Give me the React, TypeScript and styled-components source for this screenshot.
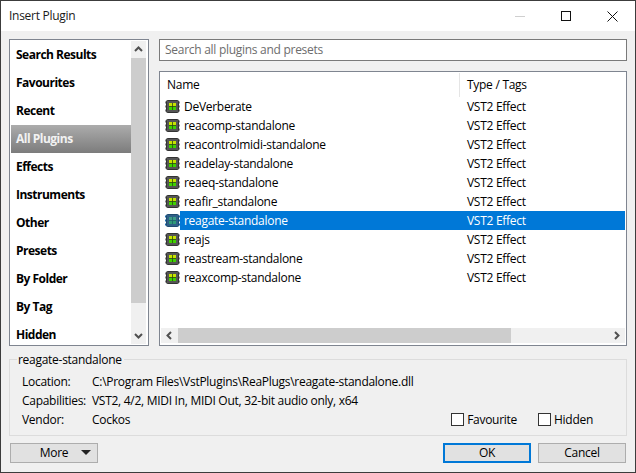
import React from "react";
import styled, { createGlobalStyle } from "styled-components";

const GlobalStyle = createGlobalStyle`
  html, body {
    margin: 0;
    padding: 0;
    background: #f0f0f0;
  }
  * {
    box-sizing: border-box;
  }
`;

const Window = styled.div`
  width: 636px;
  height: 473px;
  display: flex;
  flex-direction: column;
  overflow: hidden;
  background: #f0f0f0;
  border: 1px solid #3c3c3c;
  color: #000;
  font-family: "Open Sans", "Noto Sans", sans-serif;
  font-size: 12px;
  letter-spacing: -0.28px;
`;

const TitleBar = styled.div`
  height: 30px;
  flex: none;
  display: flex;
  align-items: center;
  background: #fff;
  padding-left: 8px;
  color: #1a1a1a;
`;

const Title = styled.span`
  flex: 1;
  padding-bottom: 2px;
`;

const WindowButton = styled.span`
  width: 46px;
  height: 30px;
  display: flex;
  align-items: center;
  justify-content: center;
`;

const Content = styled.div`
  flex: 1;
  min-height: 0;
  display: flex;
  flex-direction: column;
  padding: 8px 8px 0;
`;

const Top = styled.div`
  height: 307px;
  flex: none;
  display: flex;
  gap: 10px;
`;

const Sidebar = styled.div`
  width: 140px;
  flex: none;
  display: flex;
  padding: 1px 2px 1px 1px;
  background: #fff;
  border: 1px solid #7f8590;
  overflow: hidden;
`;

const Categories = styled.div`
  flex: 1;
  min-width: 0;
  height: 100%;
  overflow: hidden;
`;

const Category = styled.div<{ $active?: boolean }>`
  height: 28px;
  display: flex;
  align-items: center;
  padding: 0 0 2px 5px;
  font-weight: 700;
  letter-spacing: -0.5px;
  color: ${(p) => (p.$active ? "#f2f2f2" : "#000")};
  background: ${(p) => (p.$active ? "linear-gradient(#acacac, #7c7c7c)" : "transparent")};
`;

const VScroll = styled.div`
  width: 15px;
  flex: none;
  display: flex;
  flex-direction: column;
  background: #f0f0f0;
`;

const ScrollEnd = styled.div`
  flex: none;
  width: 15px;
  height: 17px;
  display: flex;
  align-items: center;
  justify-content: center;
`;

const VThumb = styled.div`
  height: 245px;
  flex: none;
  background: #cdcdcd;
`;

const Spacer = styled.div`
  flex: 1;
`;

const RightColumn = styled.div`
  flex: 1;
  min-width: 0;
  display: flex;
  flex-direction: column;
  gap: 10px;
`;

const Search = styled.div`
  height: 22px;
  flex: none;
  display: flex;
  align-items: center;
  padding: 0 0 2px 5px;
  background: #fff;
  border: 1px solid #7a7a7a;
  color: #6d6d6d;
`;

const Table = styled.div`
  flex: 1;
  min-height: 0;
  display: flex;
  flex-direction: column;
  padding: 1px 1px 2px;
  background: #fff;
  border: 1px solid #7f8590;
`;

const Header = styled.div`
  height: 24px;
  flex: none;
  display: flex;
  align-items: center;
`;

const HeaderName = styled.div`
  width: 299px;
  padding: 0 0 2px 6px;
  flex: none;
  height: 100%;
  display: flex;
  align-items: center;
  border-right: 1px solid #e5e5e5;
`;

const HeaderType = styled.div`
  padding: 0 0 2px 7px;
`;

const Rows = styled.div`
  flex: 1;
  min-height: 0;
`;

const Row = styled.div`
  height: 19px;
  display: flex;
  align-items: center;
  padding-left: 4px;
`;

const RowBody = styled.div<{ $selected?: boolean }>`
  flex: 1;
  height: 100%;
  display: flex;
  align-items: center;
  padding-left: 4px;
  color: ${(p) => (p.$selected ? "#fff" : "#000")};
  background: ${(p) => (p.$selected ? "#0078d7" : "transparent")};
`;

const RowName = styled.span`
  width: 283px;
  flex: none;
`;

const HScroll = styled.div`
  height: 15px;
  flex: none;
  display: flex;
  background: #f0f0f0;
`;

const HEnd = styled.div`
  width: 17px;
  flex: none;
  display: flex;
  align-items: center;
  justify-content: center;
`;

const HThumb = styled.div`
  width: 333px;
  flex: none;
  background: #cdcdcd;
`;

const Group = styled.fieldset`
  height: 85px;
  flex: none;
  margin: 5px 0 0;
  padding: 5px 33px 0 12px;
  min-width: 0;
  border: 1px solid #dcdcdc;
`;

const GroupTitle = styled.legend`
  margin-left: -5px;
  padding: 0 2px 0 1px;
  height: 16px;
  line-height: 18px;
`;

const DetailRow = styled.div`
  height: 19px;
  display: flex;
  align-items: center;
`;

const DetailLabel = styled.span`
  width: 70px;
  flex: none;
`;

const Checks = styled.div`
  margin-left: auto;
  display: flex;
  align-items: center;
  gap: 21px;
`;

const CheckLabel = styled.label`
  display: flex;
  align-items: center;
  gap: 3px;
`;

const CheckBox = styled.span`
  width: 13px;
  height: 13px;
  flex: none;
  background: #fff;
  border: 1px solid #333;
`;

const Footer = styled.div`
  display: flex;
  gap: 7px;
  margin-top: 7px;
  padding: 0 1px;
`;

const Button = styled.div<{ $primary?: boolean }>`
  width: 88px;
  height: 20px;
  display: flex;
  align-items: center;
  justify-content: center;
  padding-bottom: 1px;
  background: #e1e1e1;
  border: ${(p) => (p.$primary ? "2px solid #0078d7" : "1px solid #adadad")};
`;

const MoreButton = styled(Button)`
  gap: 13px;
  padding-left: 23px;
  margin-right: auto;
`;

const Chevron = ({ d }: { d: string }) => (
  <svg width="9" height="9" viewBox="0 0 9 9" fill="none">
    <path d={d} stroke="#505050" strokeWidth="2" />
  </svg>
);

const PluginIcon = ({ selected }: { selected?: boolean }) => {
  const body = selected ? "#2f5f86" : "#555";
  const edge = selected ? "#1f4a70" : "#333";
  const pin = selected ? "#1c6fb0" : "#8a8a8a";
  const top = selected ? "#3d9c86" : "#c8e400";
  const bottom = selected ? "#2f9a78" : "#3ed200";
  const line = selected ? "#1f5f6a" : "#2c4a10";
  return (
    <svg width="15" height="13" viewBox="0 0 15 13" style={{ flex: "none", marginBottom: 1 }}>
      <path d="M0 2.5h2M0 6.5h2M0 10.5h2M13 2.5h2M13 6.5h2M13 10.5h2" stroke={pin} strokeWidth="2" />
      <rect x="1.5" y="0.5" width="12" height="12" rx="1" fill={body} stroke={edge} />
      <rect x="4" y="3" width="7" height="3.5" fill={top} />
      <rect x="4" y="6.5" width="7" height="3.5" fill={bottom} />
      <path d="M7.5 3v7M4 6.5h7" stroke={line} strokeWidth="0.8" />
    </svg>
  );
};

const categories = [
  "Search Results",
  "Favourites",
  "Recent",
  "All Plugins",
  "Effects",
  "Instruments",
  "Other",
  "Presets",
  "By Folder",
  "By Tag",
  "Hidden",
];

const plugins = [
  "DeVerberate",
  "reacomp-standalone",
  "reacontrolmidi-standalone",
  "readelay-standalone",
  "reaeq-standalone",
  "reafir_standalone",
  "reagate-standalone",
  "reajs",
  "reastream-standalone",
  "reaxcomp-standalone",
];

export default function App() {
  return (
    <>
      <GlobalStyle />
      <Window>
        <TitleBar>
          <Title>Insert Plugin</Title>
          <WindowButton>
            <svg width="10" height="10" viewBox="0 0 10 10">
              <path d="M0 5.5h10" stroke="#cfcfcf" />
            </svg>
          </WindowButton>
          <WindowButton>
            <svg width="10" height="10" viewBox="0 0 10 10">
              <rect x="0.5" y="0.5" width="9" height="9" fill="none" stroke="#111" />
            </svg>
          </WindowButton>
          <WindowButton>
            <svg width="11" height="11" viewBox="0 0 11 11">
              <path d="M0.5 0.5l10 10M10.5 0.5l-10 10" stroke="#111" />
            </svg>
          </WindowButton>
        </TitleBar>
        <Content>
          <Top>
            <Sidebar>
              <Categories>
                {categories.map((c) => (
                  <Category key={c} $active={c === "All Plugins"}>
                    {c}
                  </Category>
                ))}
              </Categories>
              <VScroll>
                <ScrollEnd>
                  <Chevron d="M1 6l3.5-3.5L8 6" />
                </ScrollEnd>
                <VThumb />
                <Spacer />
                <ScrollEnd>
                  <Chevron d="M1 3l3.5 3.5L8 3" />
                </ScrollEnd>
              </VScroll>
            </Sidebar>
            <RightColumn>
              <Search>Search all plugins and presets</Search>
              <Table>
                <Header>
                  <HeaderName>Name</HeaderName>
                  <HeaderType>Type / Tags</HeaderType>
                </Header>
                <Rows>
                  {plugins.map((p) => {
                    const selected = p === "reagate-standalone";
                    return (
                      <Row key={p}>
                        <PluginIcon selected={selected} />
                        <RowBody $selected={selected}>
                          <RowName>{p}</RowName>
                          <span>VST2 Effect</span>
                        </RowBody>
                      </Row>
                    );
                  })}
                </Rows>
                <HScroll>
                  <HEnd>
                    <Chevron d="M6 1L2.5 4.5 6 8" />
                  </HEnd>
                  <HThumb />
                  <Spacer />
                  <HEnd>
                    <Chevron d="M3 1l3.5 3.5L3 8" />
                  </HEnd>
                </HScroll>
              </Table>
            </RightColumn>
          </Top>
          <Group>
            <GroupTitle>reagate-standalone</GroupTitle>
            <DetailRow>
              <DetailLabel>Location:</DetailLabel>
              <span>C:\Program Files\VstPlugins\ReaPlugs\reagate-standalone.dll</span>
            </DetailRow>
            <DetailRow>
              <DetailLabel>Capabilities:</DetailLabel>
              <span>VST2, 4/2, MIDI In, MIDI Out, 32-bit audio only, x64</span>
            </DetailRow>
            <DetailRow>
              <DetailLabel>Vendor:</DetailLabel>
              <span>Cockos</span>
              <Checks>
                <CheckLabel>
                  <CheckBox />
                  Favourite
                </CheckLabel>
                <CheckLabel>
                  <CheckBox />
                  Hidden
                </CheckLabel>
              </Checks>
            </DetailRow>
          </Group>
          <Footer>
            <MoreButton>
              More
              <svg width="10" height="5" viewBox="0 0 10 5">
                <path d="M0 0h10L5 5z" fill="#222" />
              </svg>
            </MoreButton>
            <Button $primary>OK</Button>
            <Button>Cancel</Button>
          </Footer>
        </Content>
      </Window>
    </>
  );
}
